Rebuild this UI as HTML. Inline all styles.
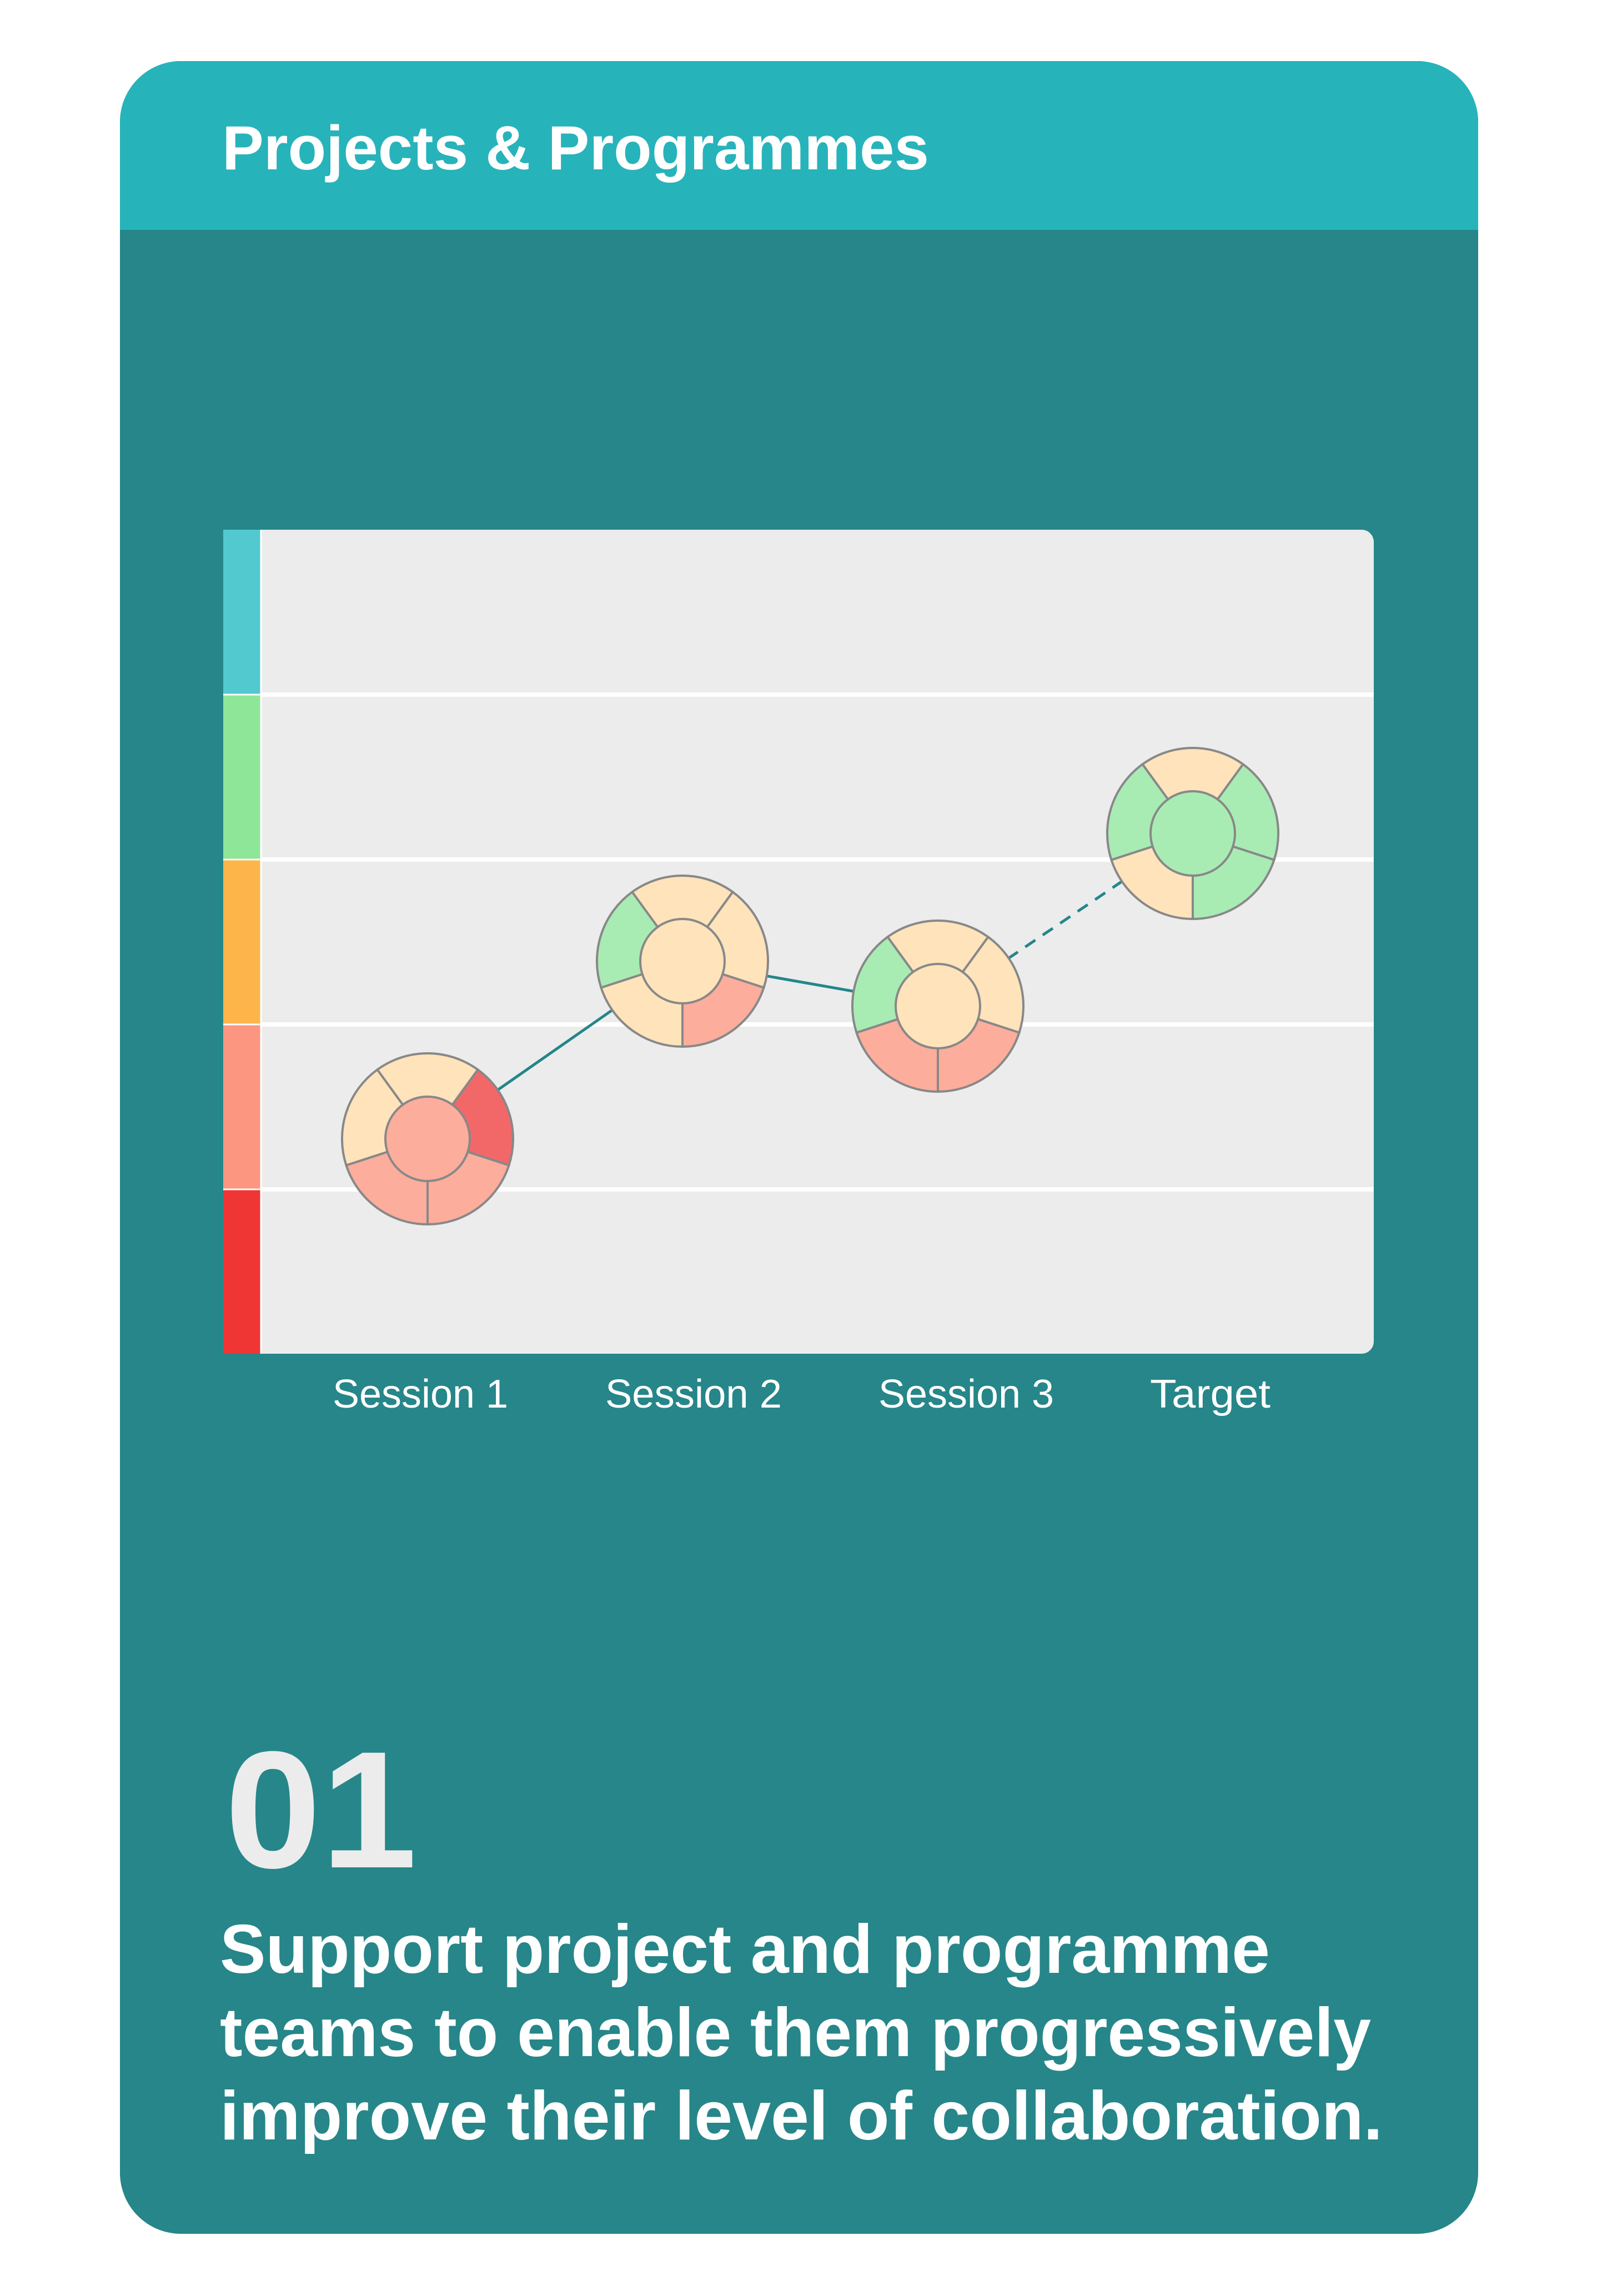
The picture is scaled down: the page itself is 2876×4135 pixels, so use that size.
<!DOCTYPE html>
<html><head><meta charset="utf-8"><style>
html,body{margin:0;padding:0;background:#fff;}
svg{display:block;}
</style></head><body>
<svg width="2876" height="4135" viewBox="0 0 2876 4135" xmlns="http://www.w3.org/2000/svg" font-family="'Liberation Sans', sans-serif">
<defs><clipPath id="card"><rect x="216" y="110" width="2446" height="3913" rx="110" ry="110"/></clipPath></defs>
<g clip-path="url(#card)">
<rect x="216" y="110" width="2446" height="3913" fill="#268689"/>
<rect x="216" y="110" width="2446" height="304" fill="#27b3ba"/>
</g>
<text x="400" y="305" font-size="112" font-weight="bold" fill="#fff" textLength="1273" lengthAdjust="spacingAndGlyphs">Projects &amp; Programmes</text>

<!-- chart -->
<rect x="402" y="954" width="2072" height="1484" rx="22" fill="#ececec"/>
<g>
<rect x="402" y="954" width="68" height="297" fill="#52c9cf"/>
<rect x="402" y="1251" width="68" height="297" fill="#8ee698"/>
<rect x="402" y="1548" width="68" height="297" fill="#fdb54b"/>
<rect x="402" y="1845" width="68" height="297" fill="#fd9680"/>
<rect x="402" y="2142" width="68" height="296" fill="#f03535"/>
<g stroke="#fff" stroke-width="3">
<line x1="402" y1="1251" x2="470" y2="1251"/><line x1="402" y1="1548" x2="470" y2="1548"/>
<line x1="402" y1="1845" x2="470" y2="1845"/><line x1="402" y1="2142" x2="470" y2="2142"/>
<line x1="470" y1="954" x2="470" y2="2438"/>
</g>
</g>
<g stroke="#fff" stroke-width="8">
<line x1="470" y1="1251" x2="2474" y2="1251"/>
<line x1="470" y1="1548" x2="2474" y2="1548"/>
<line x1="470" y1="1845" x2="2474" y2="1845"/>
<line x1="470" y1="2142" x2="2474" y2="2142"/>
</g>

<g stroke="#23868a" stroke-width="5" fill="none">
<line x1="770" y1="2051" x2="1229" y2="1731"/>
<line x1="1229" y1="1731" x2="1689" y2="1812"/>
<line x1="1689" y1="1812" x2="2148" y2="1501" stroke-dasharray="22 16"/>
</g>

<g stroke="#888" stroke-width="4">
<!-- circle 1 -->
<g transform="translate(770,2051)">
<path d="M0 0 L-90.5 -124.6 A154 154 0 0 1 90.5 -124.6 Z" fill="#ffe3bb"/>
<path d="M0 0 L90.5 -124.6 A154 154 0 0 1 146.5 47.6 Z" fill="#f26868"/>
<path d="M0 0 L146.5 47.6 A154 154 0 0 1 0 154 Z" fill="#fcad9c"/>
<path d="M0 0 L0 154 A154 154 0 0 1 -146.5 47.6 Z" fill="#fcad9c"/>
<path d="M0 0 L-146.5 47.6 A154 154 0 0 1 -90.5 -124.6 Z" fill="#ffe3bb"/>
<circle r="76" fill="#fcad9c"/>
</g>
<!-- circle 2 -->
<g transform="translate(1229,1731)">
<path d="M0 0 L-90.5 -124.6 A154 154 0 0 1 90.5 -124.6 Z" fill="#ffe3bb"/>
<path d="M0 0 L90.5 -124.6 A154 154 0 0 1 146.5 47.6 Z" fill="#ffe3bb"/>
<path d="M0 0 L146.5 47.6 A154 154 0 0 1 0 154 Z" fill="#fcad9c"/>
<path d="M0 0 L0 154 A154 154 0 0 1 -146.5 47.6 Z" fill="#ffe3bb"/>
<path d="M0 0 L-146.5 47.6 A154 154 0 0 1 -90.5 -124.6 Z" fill="#a8ecb4"/>
<circle r="76" fill="#ffe3bb"/>
</g>
<!-- circle 3 -->
<g transform="translate(1689,1812)">
<path d="M0 0 L-90.5 -124.6 A154 154 0 0 1 90.5 -124.6 Z" fill="#ffe3bb"/>
<path d="M0 0 L90.5 -124.6 A154 154 0 0 1 146.5 47.6 Z" fill="#ffe3bb"/>
<path d="M0 0 L146.5 47.6 A154 154 0 0 1 0 154 Z" fill="#fcad9c"/>
<path d="M0 0 L0 154 A154 154 0 0 1 -146.5 47.6 Z" fill="#fcad9c"/>
<path d="M0 0 L-146.5 47.6 A154 154 0 0 1 -90.5 -124.6 Z" fill="#a8ecb4"/>
<circle r="76" fill="#ffe3bb"/>
</g>
<!-- target -->
<g transform="translate(2148,1501)">
<path d="M0 0 L-90.5 -124.6 A154 154 0 0 1 90.5 -124.6 Z" fill="#ffe3bb"/>
<path d="M0 0 L90.5 -124.6 A154 154 0 0 1 146.5 47.6 Z" fill="#a8ecb4"/>
<path d="M0 0 L146.5 47.6 A154 154 0 0 1 0 154 Z" fill="#a8ecb4"/>
<path d="M0 0 L0 154 A154 154 0 0 1 -146.5 47.6 Z" fill="#ffe3bb"/>
<path d="M0 0 L-146.5 47.6 A154 154 0 0 1 -90.5 -124.6 Z" fill="#a8ecb4"/>
<circle r="76" fill="#a8ecb4"/>
</g>
</g>

<g fill="#fff" font-size="72">
<text x="599" y="2535" textLength="316" lengthAdjust="spacingAndGlyphs">Session 1</text>
<text x="1090" y="2535" textLength="318" lengthAdjust="spacingAndGlyphs">Session 2</text>
<text x="1582" y="2535" textLength="316" lengthAdjust="spacingAndGlyphs">Session 3</text>
<text x="2071" y="2535" textLength="217" lengthAdjust="spacingAndGlyphs">Target</text>
</g>

<text x="405" y="3363" font-size="300" font-weight="bold" fill="#ececec" textLength="346" lengthAdjust="spacingAndGlyphs">01</text>
<g fill="#fff" font-size="124" font-weight="bold">
<text x="396" y="3553" textLength="1891" lengthAdjust="spacingAndGlyphs">Support project and programme</text>
<text x="396" y="3703" textLength="2073" lengthAdjust="spacingAndGlyphs">teams to enable them progressively</text>
<text x="396" y="3853" textLength="2094" lengthAdjust="spacingAndGlyphs">improve their level of collaboration.</text>
</g>
</svg>
</body></html>
